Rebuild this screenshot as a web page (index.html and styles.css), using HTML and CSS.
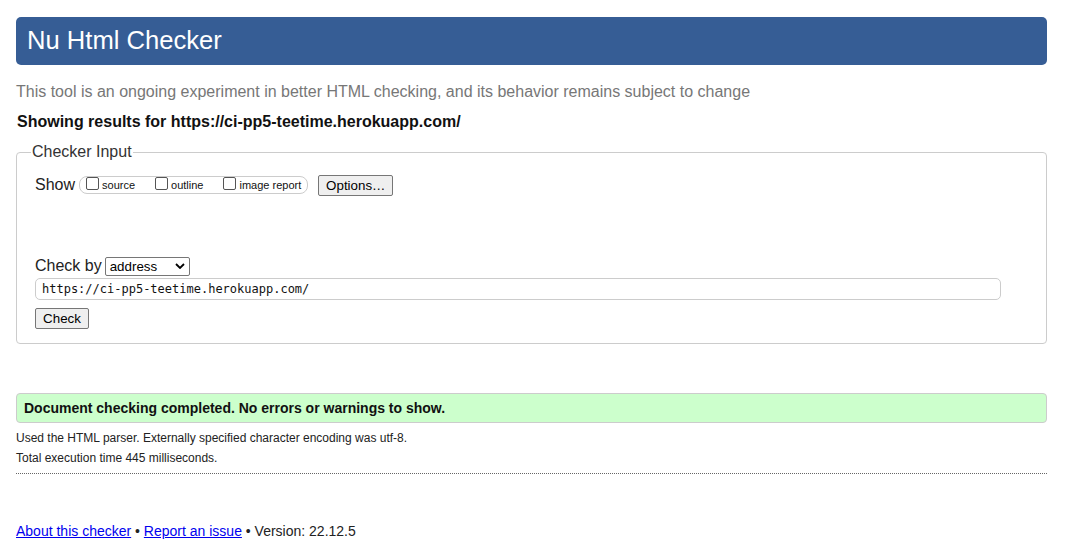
FILE: index.html
```html
<!DOCTYPE html>
<html>
<head>
<meta charset="utf-8">
<link rel="stylesheet" href="styles.css">
</head>
<body>
<h1 class="title">Nu Html Checker</h1>
<p class="lede">This tool is an ongoing experiment in better HTML checking, and its behavior remains subject to change</p>
<p class="showing">Showing results for https://ci-pp5-teetime.herokuapp.com/</p>
<fieldset class="input">
  <legend class="legend">Checker Input</legend>
  <div class="show-row">
    <span class="lbl">Show</span>
    <span class="opts">
      <label class="opt"><span class="cb"></span>source</label>
      <label class="opt"><span class="cb"></span>outline</label>
      <label class="opt"><span class="cb"></span>image report</label>
    </span>
    <span class="btn opt-btn">Options…</span>
  </div>
  <div class="checkby-row">
    <span class="lbl">Check by</span>
    <span class="select">address<svg class="chev" viewBox="0 0 10 6" width="10" height="6"><path d="M1 1 L5 5 L9 1" fill="none" stroke="#000" stroke-width="1.8"/></svg></span>
  </div>
  <div class="url">https://ci-pp5-teetime.herokuapp.com/</div>
  <div><span class="btn check-btn">Check</span></div>
</fieldset>
<div class="success">Document checking completed. No errors or warnings to show.</div>
<p class="details">Used the HTML parser. Externally specified character encoding was utf-8.</p>
<p class="details">Total execution time 445 milliseconds.</p>
<hr class="dots">
<p class="footer"><a href="#">About this checker</a> • <a href="#">Report an issue</a> • Version: 22.12.5</p>
</body>
</html>
```
FILE: styles.css
```css
html, body {
  margin: 0;
  background: #fff;
}
body {
  padding: 17px 25px 0 16px;
  font-family: "Liberation Sans", Arial, sans-serif;
  color: #111;
}
.title {
  margin: 0;
  height: 48px;
  line-height: 46px;
  padding-left: 11px;
  background: #365d95;
  color: #fff;
  font-size: 25.6px;
  font-weight: normal;
  border-radius: 5px;
}
.lede {
  margin: 17px 0 0;
  font-size: 16px;
  line-height: 20px;
  color: #777;
}
.showing {
  margin: 10px 0 0 1px;
  font-size: 16px;
  line-height: 20px;
  font-weight: bold;
}
.input {
  margin: 11px 0 0;
  padding: 13px 18px 14px 18px;
  border: 1px solid #ccc;
  border-radius: 4px;
  min-inline-size: 0;
}
.legend {
  padding: 0 1px;
  margin-left: -4px;
  font-size: 16px;
  line-height: 18px;
  color: #333;
}
.show-row {
  display: flex;
  align-items: center;
  height: 22px;
}
.lbl {
  font-size: 16px;
  color: #222;
}
.opts {
  display: inline-flex;
  align-items: center;
  margin-left: 4px;
  height: 16px;
  padding: 0 6px 0 6px;
  border: 1px solid #ccc;
  border-radius: 8px;
  font-size: 11px;
}
.opt {
  display: inline-flex;
  align-items: center;
  margin-right: 20px;
}
.opt:last-child { margin-right: 0; }
.cb {
  width: 11px;
  height: 11px;
  border: 1px solid #555;
  border-radius: 2px;
  margin-right: 3px;
  position: relative;
  top: -2px;
}
.btn {
  display: inline-block;
  box-sizing: border-box;
  background: #efefef;
  border: 1px solid #767676;
  border-radius: 2px;
  font-size: 13.33px;
  color: #000;
  text-align: center;
}
.opt-btn {
  margin-left: 10px;
  width: 75px;
  height: 21px;
  line-height: 19px;
}
.checkby-row {
  display: flex;
  align-items: center;
  margin-top: 59px;
  height: 22px;
}
.select {
  display: inline-flex;
  align-items: center;
  justify-content: space-between;
  box-sizing: border-box;
  margin-left: 3px;
  width: 85px;
  height: 19px;
  padding: 0 4px 0 4px;
  border: 1px solid #767676;
  border-radius: 2px;
  font-size: 13.33px;
  color: #000;
}
.url {
  box-sizing: border-box;
  margin-top: 1px;
  width: 966px;
  height: 22px;
  line-height: 20px;
  padding-left: 6px;
  border: 1px solid #ccc;
  border-radius: 5px;
  font-family: "DejaVu Sans Mono", "Liberation Mono", monospace;
  font-size: 12px;
  color: #111;
}
.check-btn {
  margin-top: 8px;
  width: 54px;
  height: 21px;
  line-height: 19px;
}
.success {
  margin-top: 49px;
  box-sizing: border-box;
  height: 30px;
  line-height: 28px;
  padding-left: 7px;
  background: #ccffcc;
  border: 1px solid #ccc;
  border-radius: 4px;
  font-size: 14px;
  font-weight: bold;
}
.details {
  margin: 8px 0 0;
  font-size: 12px;
  line-height: 14px;
  color: #222;
}
.details + .details { margin-top: 6px; }
.dots {
  margin: 8px 0 0;
  border: 0;
  border-top: 1px dotted #666;
  height: 0;
}
.footer {
  margin: 49px 0 0;
  font-size: 14px;
  line-height: 16px;
  color: #222;
}
.footer a { color: #00e; }
```
